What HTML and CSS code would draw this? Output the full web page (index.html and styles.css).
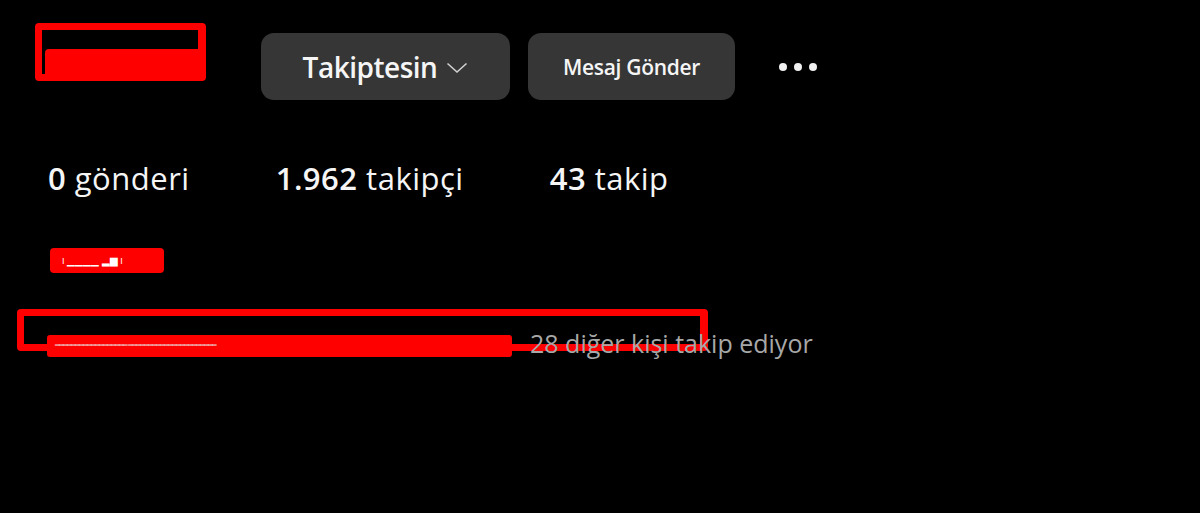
FILE: index.html
```html
<!DOCTYPE html>
<html lang="tr">
<head>
<meta charset="utf-8">
<title>Profil</title>
<link rel="stylesheet" href="styles.css">
</head>
<body>
<main class="profile">
  <header class="top">
    <div class="name-redact">
      <span class="fill fill-name"></span>
    </div>
    <div class="actions">
      <button class="btn btn-follow">Takiptesin
        <svg class="chev" width="22" height="12" viewBox="0 0 22 12"><path d="M1.5 1.5 L11 10 L20.5 1.5" fill="none" stroke="#d0d0d0" stroke-width="1.6"/></svg>
      </button>
      <button class="btn btn-msg">Mesaj Gönder</button>
      <div class="more"><span></span><span></span><span></span></div>
    </div>
  </header>

  <ul class="stats">
    <li><b>0</b> gönderi</li>
    <li><b>1.962</b> takipçi</li>
    <li><b>43</b> takip</li>
  </ul>

  <div class="bio-redact"><span class="specks">ı ▁▁▁▁ ▂▆ ı</span></div>

  <div class="followed">
    <div class="followed-box"></div>
    <div class="followed-fill"><span class="specks2">▁▁▁▁▁▁▁▁▁▁▁▁▁▁▁▁▁▁ ▁▁▁▁▁▁▁▁▁▁ ▁▁▁▁▁▁▁▁▁▁▁▁</span></div>
    <span class="followed-text">28 diğer kişi takip ediyor</span>
  </div>
</main>
</body>
</html>
```

FILE: styles.css
```css
* { box-sizing: border-box; }
html, body { margin: 0; padding: 0; background: #000; }
body {
  width: 1200px;
  height: 513px;
  overflow: hidden;
  font-family: "Open Sans", "Noto Sans", sans-serif;
  color: #f5f5f5;
}
.profile { padding: 0; }

.top {
  display: flex;
  align-items: flex-start;
  padding: 23px 0 0 35px;
}
.name-redact {
  position: relative;
  width: 171px;
  height: 58px;
  border: 7px solid #ff0000;
  border-right-width: 8px;
  border-radius: 4px;
}
.fill-name {
  position: absolute;
  left: 3px;
  right: 0;
  top: 19px;
  bottom: -7px;
  background: #ff0000;
  border-radius: 4px 0 0 4px;
}
.actions {
  display: flex;
  align-items: center;
  margin-left: 55px;
  margin-top: 10px;
  gap: 18px;
}
.btn {
  display: flex;
  align-items: center;
  justify-content: center;
  height: 67px;
  border: 0;
  border-radius: 13px;
  background: #363636;
  color: #f5f5f5;
  font-family: "Open Sans", sans-serif;
  font-weight: 600;
  padding: 0;
}
.btn-follow {
  width: 249px;
  font-size: 28px;
  letter-spacing: -0.5px;
  gap: 9px;
}
.chev { margin-top: 3px; }
.btn-msg {
  width: 207px;
  font-size: 21px;
  letter-spacing: -0.3px;
}
.more {
  display: flex;
  gap: 7px;
  margin-left: 26px;
}
.more span {
  width: 8px;
  height: 8px;
  border-radius: 50%;
  background: #f0f0f0;
}

.stats {
  list-style: none;
  display: flex;
  gap: 86px;
  margin: 63px 0 0;
  padding: 0 0 0 48px;
  font-size: 31px;
  letter-spacing: 0.5px;
  line-height: 1;
}
.stats b { font-weight: 600; }

.bio-redact {
  width: 114px;
  height: 25px;
  margin: 54px 0 0 50px;
  background: #ff0000;
  border-radius: 4px;
  overflow: hidden;
  color: #fff;
  font-size: 10px;
  line-height: 25px;
  padding-left: 12px;
  white-space: nowrap;
}

.followed {
  position: relative;
  height: 60px;
  margin-top: 34px;
}
.followed-box {
  position: absolute;
  left: 17px;
  top: 2px;
  width: 691px;
  height: 42px;
  border: 7px solid #ff0000;
  border-right-width: 8px;
  border-radius: 4px;
}
.followed-fill {
  position: absolute;
  left: 47px;
  top: 28px;
  width: 465px;
  height: 22px;
  background: #ff0000;
  border-radius: 3px;
  overflow: hidden;
  color: #e8e8e8;
  font-size: 6px;
  line-height: 14px;
  padding-left: 8px;
  white-space: nowrap;
  letter-spacing: -1px;
}
.followed-text {
  position: absolute;
  left: 530px;
  top: 21px;
  font-size: 25px;
  color: #a8a8a8;
  line-height: 1.2;
  white-space: nowrap;
}
```
